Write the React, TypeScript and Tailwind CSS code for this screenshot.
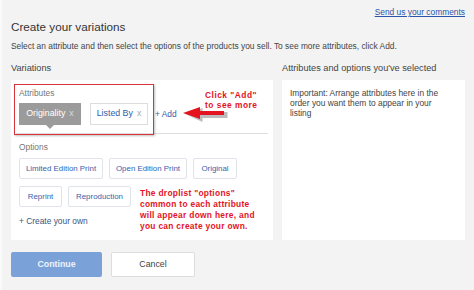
import React from "react";

const OPTION_ROWS = [
  [
    { label: "Limited Edition Print", w: "w-[84px]" },
    { label: "Open Edition Print", w: "w-[78px]" },
    { label: "Original", w: "w-[44px]" },
  ],
  [
    { label: "Reprint", w: "w-[43px]" },
    { label: "Reproduction", w: "w-[63px]" },
  ],
];

function LeftArrow() {
  return (
    <svg width="48" height="18" viewBox="0 0 48 18" className="absolute left-[170px] top-[25px]">
      <polygon points="3,7 20,1 20,5 45,5 45,11 20,11 20,15" fill="#6b6b6b" opacity="0.45" transform="translate(1.5,2)" />
      <polygon points="2,8 19,2 19,6 43,6 43,10 19,10 19,14" fill="#e3141f" />
    </svg>
  );
}

export default function App() {
  return (
    <div className="flex h-[290px] w-[474px] flex-col border-l-[2px] border-[#fafafa] bg-[#f3f3f3] pl-[9px] pr-[9px] font-['Liberation_Sans',Arial,sans-serif] text-[#333]">
      {/* Header */}
      <div className="flex justify-end pt-[7px]">
        <a className="text-[8.4px] leading-[10px] text-[#2b55ac] underline">Send us your comments</a>
      </div>
      <h1 className="mt-[3px] text-[11.7px] leading-[14px] text-[#333]">Create your variations</h1>
      <p className="mt-[7px] text-[8.4px] leading-[10px] text-[#444]">
        Select an attribute and then select the options of the products you sell. To see more attributes, click Add.
      </p>

      {/* Columns */}
      <div className="mt-[12px] flex gap-[9px]">
        <div className="flex w-[262px] flex-col">
          <div className="text-[9.2px] leading-[11px] text-[#444]">Variations</div>
          <div className="relative mt-[6px] h-[160px] bg-white">
            <div className="mx-[5px] border-b border-[#dedede] px-[3px] pb-[8px] pt-[8px]">
              <div className="text-[8.4px] leading-[10px] text-[#777]">Attributes</div>
              <div className="mt-[5px] flex items-center">
                <div className="relative flex h-[22px] w-[62px] items-center justify-center gap-[4px] bg-[#9b9b9b] text-[8.8px] text-white">
                  <span>Originality</span>
                  <span className="text-[#dcdcdc]">x</span>
                  <div className="absolute left-[27px] top-[22px] h-0 w-0 border-x-[4px] border-t-[4px] border-x-transparent border-t-[#9b9b9b]" />
                </div>
                <div className="ml-[9px] flex h-[22px] w-[58px] items-center justify-center gap-[4px] border border-[#dddddd] bg-white text-[8.8px] text-[#2f5ea8]">
                  <span>Listed By</span>
                  <span className="text-[#aaa]">x</span>
                </div>
                <span className="ml-[7px] text-[8.4px] text-[#2f5ea8]">+ Add</span>
              </div>
            </div>

            <div className="px-[8px] pt-[8px]">
              <div className="text-[8.4px] leading-[10px] text-[#777]">Options</div>
              <div className="mt-[6px] flex flex-col gap-[7px]">
                {OPTION_ROWS.map((row, i) => (
                  <div key={i} className="flex gap-[6px]">
                    {row.map((o) => (
                      <div
                        key={o.label}
                        className={`flex h-[21px] ${o.w} items-center justify-center rounded-[2px] border border-[#e0e4ea] bg-white text-[7.9px] text-[#3663ad]`}
                      >
                        {o.label}
                      </div>
                    ))}
                  </div>
                ))}
              </div>
              <div className="mt-[8px] text-[8.4px] leading-[12px] text-[#3b5680]">+ Create your own</div>
            </div>

            {/* Annotations */}
            <div className="pointer-events-none absolute left-[3px] top-[4px] h-[51px] w-[140px] border-[1.5px] border-[#d9343c] shadow-[1px_1px_2px_rgba(0,0,0,0.25)]" />
            <LeftArrow />
            <div className="absolute left-[194px] top-[10px] text-[8.4px] font-bold leading-[10px] tracking-[0.5px] text-[#e3141f]">
              <div>Click "Add"</div>
              <div>to see more</div>
            </div>
            <div className="absolute left-[129px] top-[108px] text-[8.4px] font-bold leading-[11px] tracking-[0.3px] text-[#e3141f]">
              <div>The droplist "options"</div>
              <div>common to each attribute</div>
              <div>will appear down here, and</div>
              <div>you can create your own.</div>
            </div>
          </div>
        </div>

        <div className="flex w-[183px] flex-col">
          <div className="text-[9.2px] leading-[11px] text-[#444]">Attributes and options you've selected</div>
          <div className="mt-[6px] h-[160px] bg-white pl-[8px] pr-[20px] pt-[8px] text-[8.4px] leading-[10px] text-[#444]">
            Important: Arrange attributes here in the order you want them to appear in your listing
          </div>
        </div>
      </div>

      {/* Footer buttons */}
      <div className="mt-[12px] flex gap-[9px]">
        <button className="flex h-[25px] w-[91px] items-center justify-center rounded-[2px] bg-[#7ba2d8] text-[8.8px] font-bold text-[#eef3fb]">
          Continue
        </button>
        <button className="flex h-[25px] w-[84px] items-center justify-center rounded-[2px] border border-[#dddddd] bg-white text-[8.8px] text-[#444]">
          Cancel
        </button>
      </div>
    </div>
  );
}
